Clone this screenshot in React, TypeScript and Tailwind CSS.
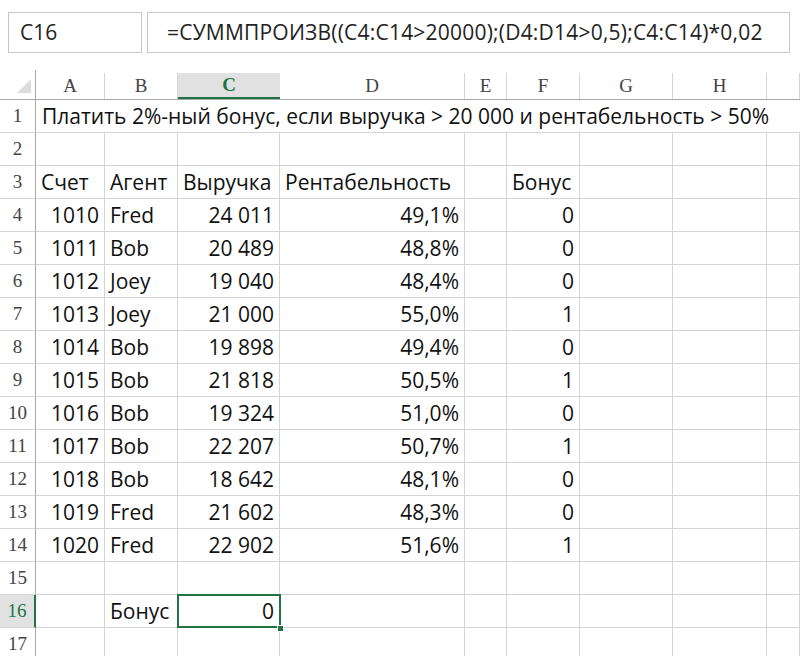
import React from 'react'

type Row = [string, string, string, string, string]

const rows: Row[] = [
  ['1010', 'Fred', '24 011', '49,1%', '0'],
  ['1011', 'Bob', '20 489', '48,8%', '0'],
  ['1012', 'Joey', '19 040', '48,4%', '0'],
  ['1013', 'Joey', '21 000', '55,0%', '1'],
  ['1014', 'Bob', '19 898', '49,4%', '0'],
  ['1015', 'Bob', '21 818', '50,5%', '1'],
  ['1016', 'Bob', '19 324', '51,0%', '0'],
  ['1017', 'Bob', '22 207', '50,7%', '1'],
  ['1018', 'Bob', '18 642', '48,1%', '0'],
  ['1019', 'Fred', '21 602', '48,3%', '0'],
  ['1020', 'Fred', '22 902', '51,6%', '1'],
]

const cols = ['A', 'B', 'C', 'D', 'E', 'F', 'G', 'H', '']

const sans = "font-['Open_Sans','Liberation_Sans',Arial,sans-serif]"
const serif = "font-['Liberation_Serif','Times_New_Roman',serif]"

function RowNum({ n, active = false }: { n: number; active?: boolean }) {
  return (
    <div
      className={`h-[33px] flex items-center justify-center border-b border-[#d4d4d4] text-[19px] ${serif} ${
        active ? 'bg-[#e1e1e1] text-[#217346] border-r-2 border-r-[#217346]' : 'text-[#444] border-r border-r-[#a8a8a8]'
      }`}
    >
      {n}
    </div>
  )
}

function Cell({ children, right = false, className = '' }: { children?: React.ReactNode; right?: boolean; className?: string }) {
  return (
    <div
      className={`h-[33px] flex items-center whitespace-nowrap border-r border-b border-[#d4d4d4] pt-[2px] text-[21px] text-[#111] ${
        right ? 'justify-end pr-[5px]' : 'pl-[5px]'
      } ${className}`}
    >
      {children}
    </div>
  )
}

function EmptyRest({ from }: { from: number }) {
  // blank cells up to the last visible column
  return (
    <>
      {Array.from({ length: 10 - from }).map((_, i) => (
        <Cell key={i} />
      ))}
    </>
  )
}

export default function App() {
  return (
    <div className={`w-[800px] h-[656px] overflow-hidden bg-white ${sans}`}>
      {/* formula bar */}
      <div className="flex gap-[5px] pt-[12px] h-[70px]">
        <div className="ml-[8px] w-[134px] h-[41px] border border-[#c6c6c6] flex items-center pl-[11px] text-[21px] text-[#222]">
          C16
        </div>
        <div className="w-[643px] h-[41px] border border-[#c6c6c6] flex items-center pl-[19px] text-[21px] tracking-[0.01em] text-[#222] whitespace-nowrap">
          =СУММПРОИЗВ((C4:C14&gt;20000);(D4:D14&gt;0,5);C4:C14)*0,02
        </div>
      </div>

      <div className="grid grid-cols-[36px_69px_73px_102px_185px_42px_73px_93px_94px_33px]">
        {/* column headers */}
        <div className="h-[30px] border-r border-b border-r-[#a8a8a8] border-b-[#a8a8a8] flex items-end justify-end pr-[4px] pb-[6px]">
          <div className="w-0 h-0 border-l-[14px] border-l-transparent border-b-[14px] border-b-[#dcdcdc]" />
        </div>
        {cols.map((c) => (
          <div key={c || 'x'} className="h-[30px] flex flex-col justify-end border-b border-[#a8a8a8]">
            <div
              className={`h-[26px] flex items-center justify-center text-[19px] ${serif} ${
                c === 'C'
                  ? 'bg-[#e1e1e1] text-[#217346] font-bold border-b-2 border-[#217346]'
                  : 'text-[#444] border-r border-[#d4d4d4]'
              }`}
            >
              {c}
            </div>
          </div>
        ))}

        {/* row 1 */}
        <RowNum n={1} />
        <div className="col-span-9 h-[33px] flex items-center pl-[6px] pt-[2px] border-b border-[#d4d4d4] text-[21px] text-[#111] whitespace-nowrap">
          Платить 2%-ный бонус, если выручка &gt; 20 000 и рентабельность &gt; 50%
        </div>

        {/* row 2 */}
        <RowNum n={2} />
        <EmptyRest from={1} />

        {/* row 3 */}
        <RowNum n={3} />
        <Cell>Счет</Cell>
        <Cell>Агент</Cell>
        <Cell>Выручка</Cell>
        <Cell>Рентабельность</Cell>
        <Cell />
        <Cell>Бонус</Cell>
        <EmptyRest from={7} />

        {rows.map((r, i) => (
          <React.Fragment key={r[0]}>
            <RowNum n={i + 4} />
            <Cell right>{r[0]}</Cell>
            <Cell>{r[1]}</Cell>
            <Cell right>{r[2]}</Cell>
            <Cell right>{r[3]}</Cell>
            <Cell />
            <Cell right>{r[4]}</Cell>
            <EmptyRest from={7} />
          </React.Fragment>
        ))}

        {/* row 15 */}
        <RowNum n={15} />
        <EmptyRest from={1} />

        {/* row 16 */}
        <RowNum n={16} active />
        <Cell />
        <Cell>Бонус</Cell>
        <div className="relative">
          <Cell right>0</Cell>
          <div className="absolute -left-[1px] -top-[1px] right-[-1px] bottom-0 border-2 border-[#217346] pointer-events-none" />
          <div className="absolute right-[-4px] bottom-[-4px] w-[7px] h-[7px] bg-[#217346] border border-white" />
        </div>
        <EmptyRest from={4} />

        {/* row 17 */}
        <RowNum n={17} />
        <EmptyRest from={1} />
      </div>
    </div>
  )
}
